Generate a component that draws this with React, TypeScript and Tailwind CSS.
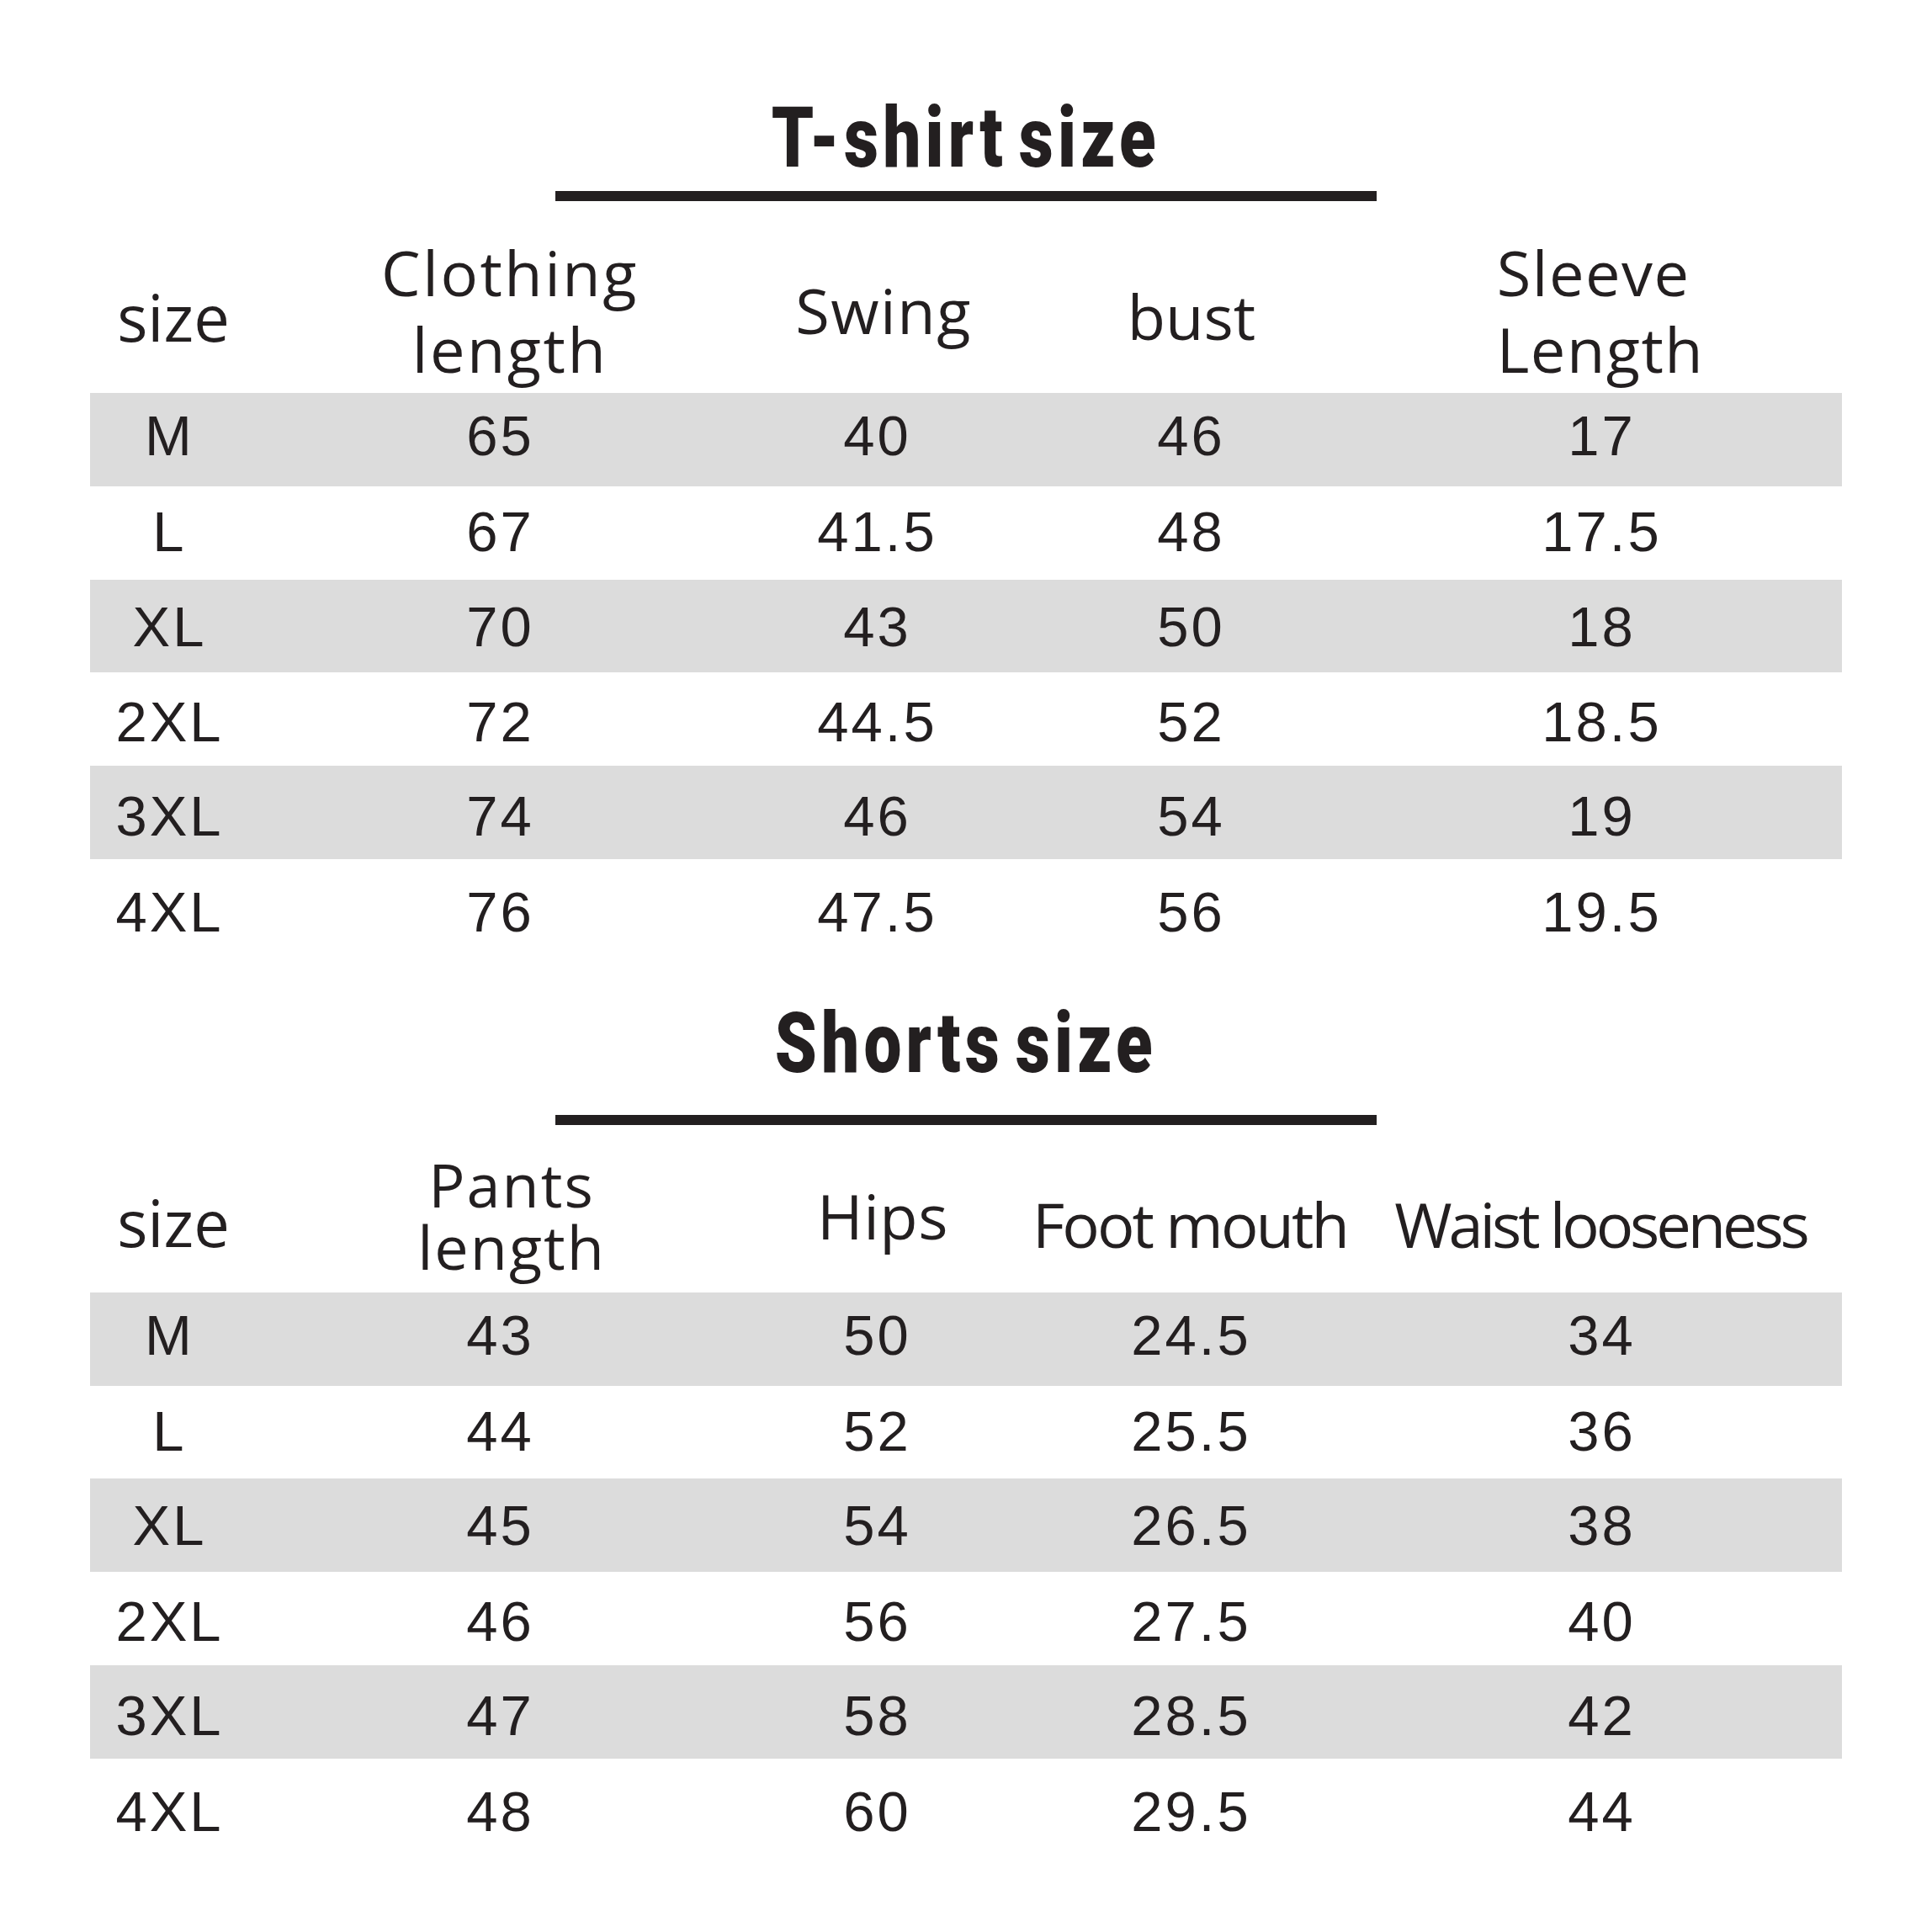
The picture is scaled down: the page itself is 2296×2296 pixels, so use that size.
import React from 'react';

interface HeadCell {
  lines: string[];
  className: string;
}

interface SizeTable {
  title: string;
  titleTop: string;
  ruleTop: string;
  headHeight: string;
  heads: HeadCell[];
  rows: string[][];
}

const tables: SizeTable[] = [
  {
    title: 'T-shirt size',
    titleTop: 'pt-[114px]',
    ruleTop: 'mt-[13px]',
    headHeight: 'h-[228px]',
    heads: [
      { lines: ['size'], className: 'text-[76px] leading-[76px] pb-[52px] pl-[12px]' },
      { lines: ['Clothing', 'length'], className: 'text-[74px] leading-[91px] pb-[7px] pl-[26px] tracking-[2.5px]' },
      { lines: ['Swing'], className: 'text-[74px] leading-[74px] pb-[61px] pl-[18px] tracking-[1.5px]' },
      { lines: ['bust'], className: 'text-[74px] leading-[74px] pb-[54px] pl-[4px]' },
      { lines: ['Sleeve', 'Length'], className: 'text-[74px] leading-[91px] pb-[7px] tracking-[1.5px] text-left' },
    ],
    rows: [
      ['M', '65', '40', '46', '17'],
      ['L', '67', '41.5', '48', '17.5'],
      ['XL', '70', '43', '50', '18'],
      ['2XL', '72', '44.5', '52', '18.5'],
      ['3XL', '74', '46', '54', '19'],
      ['4XL', '76', '47.5', '56', '19.5'],
    ],
  },
  {
    title: 'Shorts size',
    titleTop: 'pt-[58px]',
    ruleTop: 'mt-[35px]',
    headHeight: 'h-[199px]',
    heads: [
      { lines: ['size'], className: 'text-[76px] leading-[76px] pb-[45px] pl-[12px]' },
      { lines: ['Pants', 'length'], className: 'text-[72px] leading-[74.6px] pb-[17px] pl-[30px] tracking-[2px]' },
      { lines: ['Hips'], className: 'text-[74px] leading-[74px] pb-[54px] pl-[16px] tracking-[0.5px]' },
      { lines: ['Foot mouth'], className: 'text-[74px] leading-[74px] pb-[44px] tracking-[-2.9px] whitespace-nowrap' },
      { lines: ['Waist looseness'], className: 'text-[74px] leading-[74px] pb-[44px] tracking-[-4.1px] whitespace-nowrap' },
    ],
    rows: [
      ['M', '43', '50', '24.5', '34'],
      ['L', '44', '52', '25.5', '36'],
      ['XL', '45', '54', '26.5', '38'],
      ['2XL', '46', '56', '27.5', '40'],
      ['3XL', '47', '58', '28.5', '42'],
      ['4XL', '48', '60', '29.5', '44'],
    ],
  },
];

// the numbers sit a little lower in each following row of the original chart
const rowNudge = ['pt-[0px]', 'pt-[3px]', 'pt-[5px]', 'pt-[8px]', 'pt-[9px]', 'pt-[12px]'];

const cols = 'grid grid-cols-[186px_600px_296px_450px_526px_24px]';

function Table({ table }: { table: SizeTable }) {
  return (
    <section>
      <div className={`${table.titleTop} text-center`}>
        <h1 className="inline-block scale-x-[0.8] font-['Roboto',sans-serif] text-[100px] font-black leading-[100px] tracking-[6.5px] [word-spacing:-14px] text-[#231f20]">
          {table.title}
        </h1>
      </div>
      <div className={`mx-auto ${table.ruleTop} h-[12px] w-[976px] bg-[#231f20]`} />

      <div className={`${cols} ${table.headHeight} items-end font-['Open_Sans',sans-serif] text-[#231f20]`}>
        {table.heads.map((h, i) => (
          <div key={i} className="flex justify-center">
            <div className={h.className}>
              {h.lines.map(line => (
                <div key={line} className={h.className.includes('text-left') ? '' : 'text-center'}>
                  {line}
                </div>
              ))}
            </div>
          </div>
        ))}
      </div>

      <div className="font-['Liberation_Sans',Arial,sans-serif] text-[67px] text-[#231f20]">
        {table.rows.map((row, r) => (
          <div key={r} className={`${cols} h-[110.8px] ${r % 2 === 0 ? 'bg-[#dcdcdc]' : 'bg-white'}`}>
            {row.map((v, c) => (
              <div key={c} className={`${rowNudge[r]} pl-[3px] text-center leading-[102px] tracking-[3px]`}>
                {v}
              </div>
            ))}
            <div />
          </div>
        ))}
      </div>
    </section>
  );
}

export default function App() {
  return (
    <div className="h-[2296px] w-[2296px] bg-white">
      <div className="mx-auto w-[2082px]">
        {tables.map(t => (
          <Table key={t.title} table={t} />
        ))}
      </div>
    </div>
  );
}
